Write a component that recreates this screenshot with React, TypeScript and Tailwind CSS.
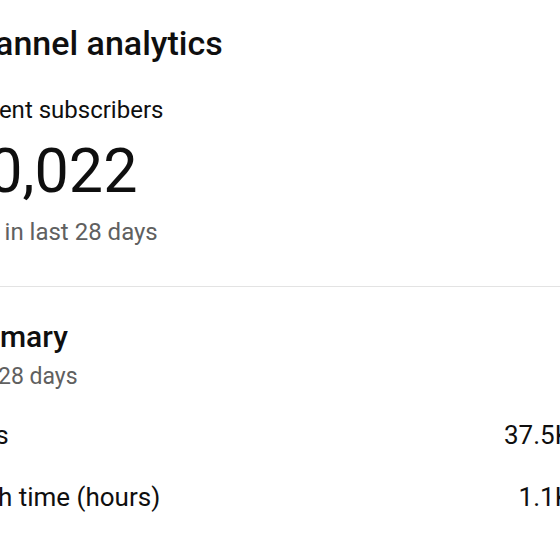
import React from "react";

const stats = [
  { label: "Views", value: "37.5K" },
  { label: "Watch time (hours)", value: "1.1K" },
];

const App = () => {
  return (
    <div className="w-[560px] h-[560px] overflow-hidden bg-white text-[#0f0f0f] font-['Roboto',sans-serif]">
      {/* card is wider than the viewport, cropped on both sides */}
      <div className="w-[665px] -ml-[70px]">
        <div className="px-6 pt-[23px] pb-[40px]">
          <h1 className="text-[34px] leading-[40px] font-medium">Channel analytics</h1>
          <div className="mt-[31px] text-[24px] leading-[32px]">Current subscribers</div>
          <div className="mt-[11px] text-[61px] leading-[68px]">10,022</div>
          <div className="mt-[13px] ml-[4px] text-[24px] leading-[28px] text-[#606060]">+22 in last 28 days</div>
        </div>

        <div className="h-px bg-[#e3e3e3]" />

        <div className="pl-[9px] pr-6 pt-[32px]">
          <h2 className="text-[30px] leading-[36px] font-medium">Summary</h2>
          <div className="mt-[8px] ml-[9px] text-[23px] leading-[28px] text-[#606060]">Last 28 days</div>

          <div className="mt-[28px] flex flex-col gap-[30px]">
            {stats.map((s) => (
              <div key={s.label} className="flex justify-between text-[26px] leading-[32px]">
                <span>{s.label}</span>
                <span>{s.value}</span>
              </div>
            ))}
          </div>
        </div>
      </div>
    </div>
  );
};

export default App;
